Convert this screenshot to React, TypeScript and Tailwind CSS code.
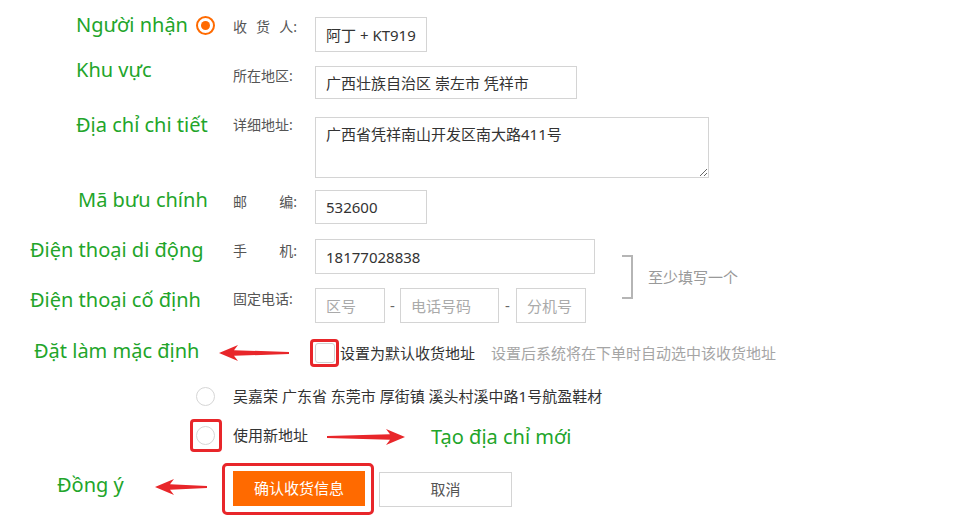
import React from "react";

const green = "text-[#22a52a]";

function Arrow({ w, dir }: { w: number; dir: "left" | "right" }) {
  const pts: [number, number][] = [
    [0, 9], [19, 1], [15, 6.2], [w, 7.9], [w, 10.1], [15, 11.8], [19, 17],
  ];
  const p = pts.map(([x, y]) => `${dir === "left" ? x : w - x},${y}`).join(" ");
  return (
    <svg width={w} height={18} viewBox={`0 0 ${w} 18`} className="shrink-0">
      <polygon points={p} fill="#e8262a" />
    </svg>
  );
}

function Label({ parts, className = "" }: { parts: string[]; className?: string }) {
  return (
    <div className={"w-[82px] shrink-0 " + className}>
      <div className="w-[64px] flex justify-between text-[14px] leading-[20px] text-[#555]">
        {parts.map((p, i) => (
          <span key={i}>{p}</span>
        ))}
      </div>
    </div>
  );
}

function Note({ children, className = "" }: { children: React.ReactNode; className?: string }) {
  return <div className={"text-[20px] leading-[24px] whitespace-nowrap shrink-0 " + green + " " + className}>{children}</div>;
}

function GrayRadio() {
  return <span className="block w-[19px] h-[19px] rounded-full border-[1.5px] border-[#d6d6d6] bg-white shrink-0" />;
}

const inputCls =
  "h-full border border-[#d4d4d4] px-[10px] text-[15px] text-[#333] outline-none bg-white placeholder:text-[#aaa]";

export default function App() {
  return (
    <div className="w-[962px] h-[528px] bg-white overflow-hidden font-['Noto_Sans','Noto_Sans_CJK_SC',sans-serif]">
      <div className="flex flex-col pt-[17px]">
        {/* receiver */}
        <div className="flex items-start h-[35px]">
          <Note className="w-[196px] pl-[76px] -mt-[4px]">Người nhận</Note>
          <div className="w-[37px] shrink-0">
            <span className="flex w-[19px] h-[19px] -mt-[1px] rounded-full border-2 border-[#ff6a00] items-center justify-center">
              <span className="w-[9px] h-[9px] rounded-full bg-[#ff6a00]" />
            </span>
          </div>
          <Label parts={["收", "货", "人:"]} />
          <input readOnly value="阿丁 + KT919191" className={inputCls + " w-[112px] text-[15.5px]"} />
        </div>

        {/* area */}
        <div className="flex items-start h-[33px] mt-[14px]">
          <Note className="w-[233px] pl-[76px] -mt-[8px]">Khu vực</Note>
          <Label parts={["所在地区:"]} />
          <input readOnly value="广西壮族自治区 崇左市 凭祥市" className={inputCls + " w-[262px]"} />
        </div>

        {/* detail */}
        <div className="flex items-start h-[61px] mt-[18px]">
          <Note className="w-[233px] pl-[76px] -mt-[4px]">Địa chỉ chi tiết</Note>
          <Label parts={["详细地址:"]} className="-mt-[2px]" />
          <textarea
            readOnly
            value="广西省凭祥南山开发区南大路411号"
            className="w-[394px] h-[61px] border border-[#d4d4d4] px-[10px] pt-[6px] text-[15px] leading-[20px] text-[#333] outline-none"
          />
        </div>

        {/* zip */}
        <div className="flex items-start h-[34px] mt-[12px]">
          <Note className="w-[233px] pl-[78px] -mt-[2px]">Mã bưu chính</Note>
          <Label parts={["邮", "编:"]} className="mt-[2px]" />
          <input readOnly value="532600" className={inputCls + " w-[112px]"} />
        </div>

        {/* phones */}
        <div className="flex items-center mt-[15px]">
          <div className="flex flex-col w-[595px] shrink-0">
            <div className="flex items-start h-[35px]">
              <Note className="w-[233px] pl-[30px] -mt-[1px]">Điện thoại di động</Note>
              <Label parts={["手", "机:"]} className="mt-[2px]" />
              <input readOnly value="18177028838" className={inputCls + " w-[280px]"} />
            </div>
            <div className="flex items-start h-[35px] mt-[14px]">
              <Note className="w-[233px] pl-[30px]">Điện thoại cố định</Note>
              <Label parts={["固定电话:"]} className="mt-[1px]" />
              <input readOnly placeholder="区号" className={inputCls + " w-[70px]"} />
              <span className="w-[15px] text-center text-[15px] leading-[35px] text-[#666]">-</span>
              <input readOnly placeholder="电话号码" className={inputCls + " w-[99px]"} />
              <span className="w-[17px] text-center text-[15px] leading-[35px] text-[#666]">-</span>
              <input readOnly placeholder="分机号" className={inputCls + " w-[70px]"} />
            </div>
          </div>
          <div className="flex items-center ml-[27px] -mt-[8px]">
            <span className="block w-[11px] h-[44px] border-y-2 border-r-2 border-[#b5b5b5]" />
            <span className="ml-[15px] text-[15px] text-[#999]">至少填写一个</span>
          </div>
        </div>

        {/* default */}
        <div className="flex items-center h-[28px] mt-[16px]">
          <Note className="w-[219px] pl-[34px] -mt-[4px]">Đặt làm mặc định</Note>
          <Arrow w={70} dir="left" />
          <div className="ml-[21px] w-[29px] h-[28px] border-[3px] border-[#e8262a] rounded-[4px] flex items-center justify-center shrink-0">
            <span className="block w-[20px] h-[20px] border border-[#cfcfcf] rounded-[3px] bg-white" />
          </div>
          <span className="ml-[1px] text-[15px] text-[#333]">设置为默认收货地址</span>
          <span className="ml-[16px] text-[15px] text-[#a5a5a5]">设置后系统将在下单时自动选中该收货地址</span>
        </div>

        {/* saved address */}
        <div className="flex items-center h-[20px] mt-[19px] pl-[196px]">
          <GrayRadio />
          <span className="ml-[18px] text-[15px] text-[#333]">吴嘉荣 广东省 东莞市 厚街镇 溪头村溪中路1号航盈鞋材</span>
        </div>

        {/* new address */}
        <div className="flex items-center h-[33px] mt-[13px] pl-[190px]">
          <div className="w-[32px] h-[33px] border-[3px] border-[#e8262a] rounded-[4px] flex items-center pl-[3px] shrink-0">
            <GrayRadio />
          </div>
          <span className="ml-[11px] text-[15px] text-[#333]">使用新地址</span>
          <div className="ml-[19px] mt-[3px]">
            <Arrow w={78} dir="right" />
          </div>
          <Note className="ml-[26px] mt-[2px]">Tạo địa chỉ mới</Note>
        </div>

        {/* buttons */}
        <div className="flex items-center h-[52px] mt-[11px]">
          <Note className="w-[155px] pl-[57px] -mt-[9px]">Đồng ý</Note>
          <div className="-mt-[4px]">
            <Arrow w={52} dir="left" />
          </div>
          <div className="ml-[15px] w-[152px] h-[52px] border-[3px] border-[#e8262a] rounded-[5px] pl-[8px] pt-[5px] shrink-0">
            <button className="w-[132px] h-[35px] bg-[#ff6a00] text-white text-[15px]">确认收货信息</button>
          </div>
          <button className="ml-[5px] w-[133px] h-[35px] border border-[#d4d4d4] bg-white text-[15px] text-[#555]">取消</button>
        </div>
      </div>
    </div>
  );
}
